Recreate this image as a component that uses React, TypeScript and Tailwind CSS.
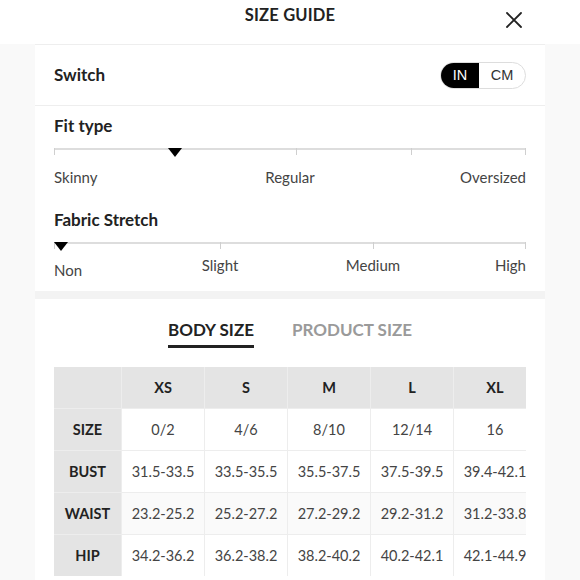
import React from "react";

const font = { fontFamily: "Lato, 'Open Sans', sans-serif" };

function Track({ ticks, marker }: { ticks: number[]; marker: number }) {
  return (
    <div className="relative h-[8px] w-full">
      <div className="absolute left-0 right-0 top-0 h-[2px] bg-[#dddddd]" />
      {ticks.map((t) => (
        <div
          key={t}
          className="absolute top-0 h-[7px] w-px bg-[#cfcfcf]"
          style={{ left: t === 472 ? 471 : t }}
        />
      ))}
      <div
        className="absolute top-0 h-0 w-0 -translate-x-1/2 border-l-[7px] border-r-[7px] border-t-[9px] border-l-transparent border-r-transparent border-t-black"
        style={{ left: marker }}
      />
    </div>
  );
}

const cols = ["XS", "S", "M", "L", "XL"];
const rows: [string, string[]][] = [
  ["SIZE", ["0/2", "4/6", "8/10", "12/14", "16"]],
  ["BUST", ["31.5-33.5", "33.5-35.5", "35.5-37.5", "37.5-39.5", "39.4-42.1"]],
  ["WAIST", ["23.2-25.2", "25.2-27.2", "27.2-29.2", "29.2-31.2", "31.2-33.8"]],
  ["HIP", ["34.2-36.2", "36.2-38.2", "38.2-40.2", "40.2-42.1", "42.1-44.9"]],
];

export default function App() {
  return (
    <div className="h-[580px] w-[580px] overflow-hidden bg-[#f9f9f9] text-[#222]" style={font}>
      {/* Header */}
      <div className="relative h-[44px] bg-white">
        <div className="pt-[5px] text-center text-[16.5px] font-bold leading-[20px] tracking-[0.2px] text-[#222]">
          SIZE GUIDE
        </div>
        <svg
          className="absolute left-[506px] top-[12px]"
          width="16"
          height="16"
          viewBox="0 0 16 16"
          fill="none"
          stroke="#222"
          strokeWidth="1.8"
          strokeLinecap="round"
        >
          <path d="M1 1 L15 15 M15 1 L1 15" />
        </svg>
      </div>

      <div className="mx-[35px] bg-white">
        {/* Switch */}
        <div className="flex h-[62px] items-center justify-between border-y border-[#eeeeee] pl-[19px] pr-[19px]">
          <span className="text-[17px] font-bold leading-[20px] text-[#222]">Switch</span>
          <div
            className="flex h-[27px] w-[86px] overflow-hidden rounded-full border border-[#dddddd] text-[14.5px] leading-[20px]"
            style={{ fontFamily: "'Liberation Sans', Arial, sans-serif" }}
          >
            <div className="flex w-[38px] items-center justify-center bg-black text-white">IN</div>
            <div className="flex flex-1 items-center justify-center text-[#333]">CM</div>
          </div>
        </div>

        {/* Fit section */}
        <div className="h-[185px] px-[19px] pt-[10px]">
          <div className="text-[17px] font-bold leading-[20px]">Fit type</div>
          <div className="mt-[12px]">
            <Track ticks={[0, 242, 357, 472]} marker={121} />
          </div>
          <div className="mt-[11px] grid grid-cols-3 text-[15px] leading-[20px] text-[#444]">
            <span className="text-left">Skinny</span>
            <span className="text-center">Regular</span>
            <span className="text-right">Oversized</span>
          </div>

          <div className="mt-[23px] text-[17px] font-bold leading-[20px]">Fabric Stretch</div>
          <div className="mt-[12px]">
            <Track ticks={[0, 166, 319, 472]} marker={7} />
          </div>
          <div className="relative mt-[5px] h-[26px] text-[15px] leading-[20px] text-[#444]">
            <span className="absolute left-0 top-[5px]">Non</span>
            <span className="absolute left-[166px] top-0 -translate-x-1/2">Slight</span>
            <span className="absolute left-[319px] top-0 -translate-x-1/2">Medium</span>
            <span className="absolute right-0 top-0">High</span>
          </div>
        </div>

        {/* Gap */}
        <div className="h-[8px] bg-[#f3f3f3]" />

        {/* Table section */}
        <div className="pb-[20px] pt-[21px]">
          <div className="flex justify-center gap-[38px] text-[17px] font-bold leading-[20px]">
            <div className="border-b-[3px] border-[#222] pb-[5px] text-[#222]">BODY SIZE</div>
            <div className="pb-[5px] text-[#9a9a9a]">PRODUCT SIZE</div>
          </div>

          <div className="mx-[19px] mt-[19px] w-[472px] overflow-hidden">
            <div className="grid w-[478px] grid-cols-[67px_repeat(5,82px)] gap-px bg-[#ededed]">
              <div className="h-[41px] bg-[#e4e4e4]" />
              {cols.map((c) => (
                <div key={c} className="flex h-[41px] items-center justify-center bg-[#e4e4e4] text-[14.5px] font-bold text-[#222]">
                  {c}
                </div>
              ))}
              {rows.map(([label, vals], i) => (
                <React.Fragment key={label}>
                  <div className="flex h-[41px] items-center justify-center bg-[#e4e4e4] text-[14.5px] font-bold text-[#222]">
                    {label}
                  </div>
                  {vals.map((v, j) => (
                    <div
                      key={j}
                      className={
                        "flex h-[41px] items-center justify-center text-[14.5px] text-[#444] " +
                        (i === 2 ? "bg-[#fafafa]" : "bg-white")
                      }
                    >
                      {v}
                    </div>
                  ))}
                </React.Fragment>
              ))}
            </div>
          </div>
        </div>
      </div>
    </div>
  );
}
